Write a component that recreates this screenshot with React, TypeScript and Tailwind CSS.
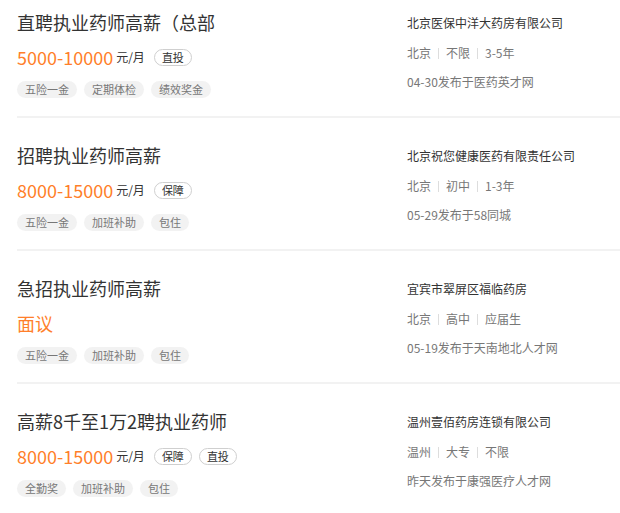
import React from "react";

interface Job {
  title: string;
  salary: string;
  unit?: boolean;
  badges: string[];
  tags: string[];
  company: string;
  meta: string[];
  posted: string;
}

const jobs: Job[] = [
  {
    title: "直聘执业药师高薪（总部",
    salary: "5000-10000",
    unit: true,
    badges: ["直投"],
    tags: ["五险一金", "定期体检", "绩效奖金"],
    company: "北京医保中洋大药房有限公司",
    meta: ["北京", "不限", "3-5年"],
    posted: "04-30发布于医药英才网",
  },
  {
    title: "招聘执业药师高薪",
    salary: "8000-15000",
    unit: true,
    badges: ["保障"],
    tags: ["五险一金", "加班补助", "包住"],
    company: "北京祝您健康医药有限责任公司",
    meta: ["北京", "初中", "1-3年"],
    posted: "05-29发布于58同城",
  },
  {
    title: "急招执业药师高薪",
    salary: "面议",
    badges: [],
    tags: ["五险一金", "加班补助", "包住"],
    company: "宜宾市翠屏区福临药房",
    meta: ["北京", "高中", "应届生"],
    posted: "05-19发布于天南地北人才网",
  },
  {
    title: "高薪8千至1万2聘执业药师",
    salary: "8000-15000",
    unit: true,
    badges: ["保障", "直投"],
    tags: ["全勤奖", "加班补助", "包住"],
    company: "温州壹佰药房连锁有限公司",
    meta: ["温州", "大专", "不限"],
    posted: "昨天发布于康强医疗人才网",
  },
];

function JobCard({ job }: { job: Job }) {
  return (
    <div className="flex pt-[25px] first:pt-[10px] pb-[18px] border-b-2 border-[#f2f2f2]">
      <div className="w-[390px] shrink-0">
        <div className="h-[24px] leading-[24px] text-[18px] text-[#333]">{job.title}</div>
        <div className="mt-[11px] h-[24px] flex items-center">
          <span className="text-[18px] leading-[24px] text-[#ff7f2a]">{job.salary}</span>
          {job.unit && <span className="ml-[3px] text-[12px] text-[#333]">元/月</span>}
          {job.badges.map((b, i) => (
            <span
              key={b}
              className={
                "h-[17px] leading-[15px] px-[7px] rounded-full border border-[#cfcfcf] text-[11px] text-[#333] " +
                (i === 0 ? "ml-[9px]" : "ml-[7px]")
              }
            >
              {b}
            </span>
          ))}
        </div>
        <div className="mt-[12px] flex gap-[7px]">
          {job.tags.map((t) => (
            <span
              key={t}
              className="h-[17px] leading-[17px] px-[8px] rounded-full bg-[#f2f2f2] text-[11px] text-[#777]"
            >
              {t}
            </span>
          ))}
        </div>
      </div>
      <div className="flex-1 pt-[1px]">
        <div className="h-[24px] leading-[24px] text-[12px] text-[#333]">{job.company}</div>
        <div className="mt-[6px] h-[24px] flex items-center text-[12px] text-[#777]">
          {job.meta.map((m, i) => (
            <React.Fragment key={m}>
              {i > 0 && <span className="inline-block w-px h-[11px] bg-[#ddd] mx-[7px]" />}
              <span>{m}</span>
            </React.Fragment>
          ))}
        </div>
        <div className="mt-[5px] h-[24px] leading-[24px] text-[12px] text-[#777]">{job.posted}</div>
      </div>
    </div>
  );
}

export default function App() {
  return (
    <div
      className="w-[620px] h-[513px] overflow-hidden bg-white pl-[17px]"
      style={{ fontFamily: '"Noto Sans CJK SC", "Noto Sans", sans-serif' }}
    >
      {jobs.map((job) => (
        <JobCard key={job.title} job={job} />
      ))}
    </div>
  );
}
